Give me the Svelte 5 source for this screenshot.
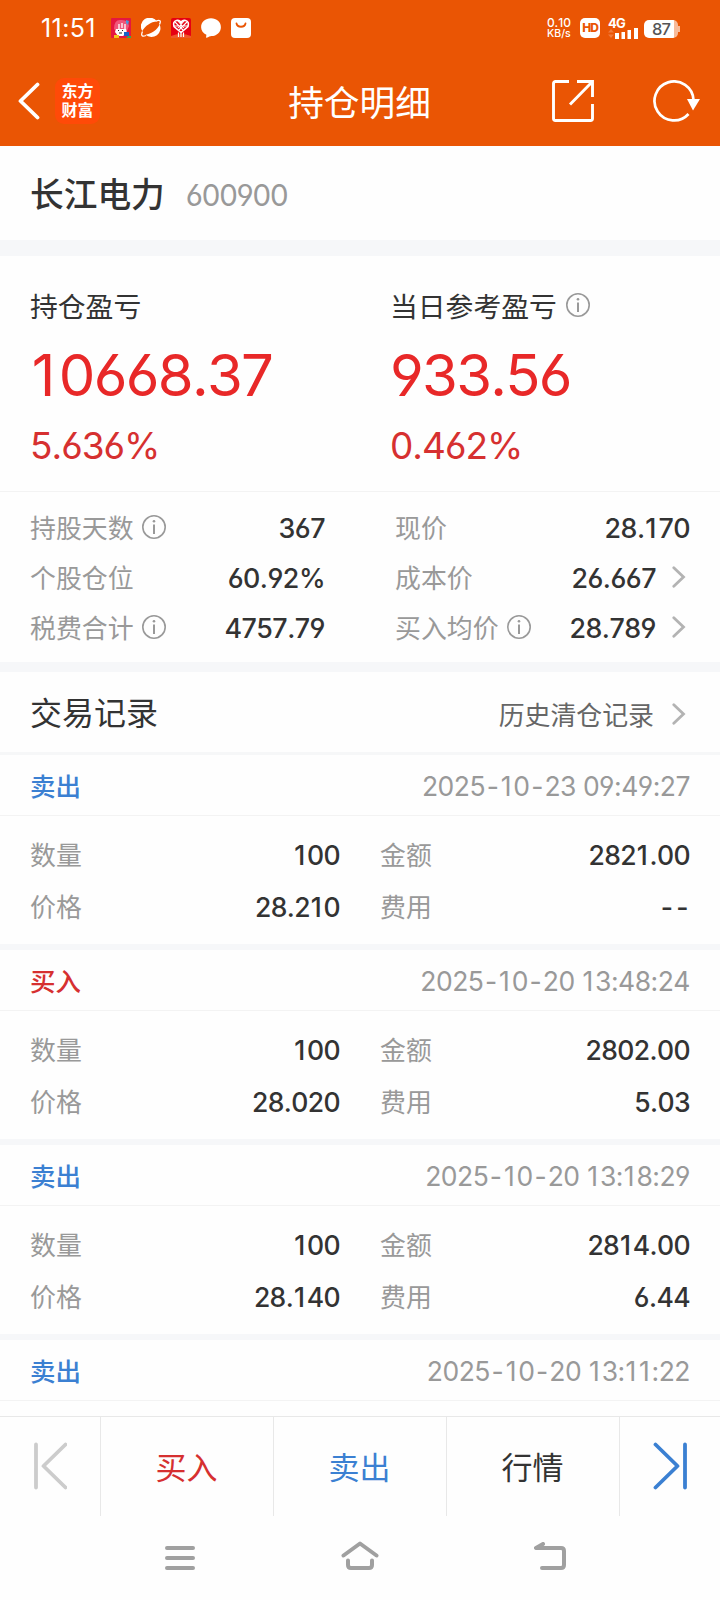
<script>
	const stats = [
		[
			{ label: '持股天数', value: '367', info: true },
			{ label: '个股仓位', value: '60.92%' },
			{ label: '税费合计', value: '4757.79', info: true }
		],
		[
			{ label: '现价', value: '28.170' },
			{ label: '成本价', value: '26.667', more: true },
			{ label: '买入均价', value: '28.789', info: true, more: true }
		]
	];

	const records = [
		{ side: '卖出', time: '2025-10-23 09:49:27', qty: '100', amount: '2821.00', price: '28.210', fee: '--' },
		{ side: '买入', time: '2025-10-20 13:48:24', qty: '100', amount: '2802.00', price: '28.020', fee: '5.03' },
		{ side: '卖出', time: '2025-10-20 13:18:29', qty: '100', amount: '2814.00', price: '28.140', fee: '6.44' },
		{ side: '卖出', time: '2025-10-20 13:11:22', qty: '', amount: '', price: '', fee: '' }
	];
</script>

<!-- gives the narrow 1 and - a bit more room -->
{#snippet num(text)}{#each text.split(/([1-])/) as part}{#if part === '1'}<span class="one">1</span>{:else if part === '-'}<span class="dash">-</span>{:else}{part}{/if}{/each}{/snippet}

{#snippet infoIcon()}
	<svg class="info" width="24" height="24" viewBox="0 0 24 24" fill="none" stroke="#999" stroke-width="1.6">
		<circle cx="12" cy="12" r="11.2" />
		<path d="M12 9.5V19" stroke-width="2" />
		<circle cx="12" cy="6.2" r="1.3" fill="#999" stroke="none" />
	</svg>
{/snippet}

{#snippet arrow()}
	<svg class="arrow" width="14" height="22" viewBox="0 0 14 22" fill="none" stroke="#b3b3b3" stroke-width="2.8" stroke-linecap="round">
		<path d="M1.8 1.8 11.5 11 1.8 20.2" />
	</svg>
{/snippet}

<div class="page">
	<header>
		<div class="status">
			<span class="clock">11:51</span>
			<div class="apps">
				<svg width="20" height="20" viewBox="0 0 20 20">
					<rect width="20" height="20" rx="1" fill="#e5173f" />
					<path d="M3 11Q3 2 9 2q8-1 9 6l-2 5H5Z" fill="#f0567a" />
					<path d="M15 2l3 1-1 4-2-2Z" fill="#4c9ad8" />
					<path d="M8 6v5M11 5v5M14 6v5" stroke="#fff" stroke-width="1.3" />
					<path d="M5 11h10l1 4-4 3H7l-3-4Z" fill="#fff" />
					<path d="M7 12.5h1M11 12.5h1M8 15h3" stroke="#222" stroke-width="1.2" />
					<path d="M3 17h5v3H3Z" fill="#f3c51c" />
					<path d="M13 14h5v4h-5Z" fill="#1762c5" />
					<path d="M17 18h3v2h-5Z" fill="#38a653" />
				</svg>
				<svg width="20" height="20" viewBox="0 0 20 20">
					<path d="M1.3 13A8.8 8.6 0 0 1 16 3.5C10 3.5 4 8 1.3 13Z" fill="#fff" />
					<path d="M4.5 16.8A9 8.6 0 0 0 18.5 6.5C17 11.5 10 16 4.5 16.8Z" fill="#fff" />
					<path d="M1.5 13.5C-.5 18 1.5 19 5 17.5M15 3c4-1.5 5.3-.3 3.5 3.5" fill="none" stroke="#fff" stroke-width="1.3" />
				</svg>
				<svg width="20" height="20" viewBox="0 0 20 20">
					<rect width="20" height="20" rx="2" fill="#e60012" />
					<path d="M0 20v-2q10-4 20 0v2Z" fill="#f0552a" />
					<path d="M10 14.5 3 8.5Q1.5 3.5 5.5 2.5 9 2 10 5q1-3 4.5-2.5 4 1 2.5 6Z" fill="none" stroke="#fff" stroke-width="1.6" />
					<path d="M4 4l8 8M7 3l6 7M16 4l-8 8M13 3l-6 7M3 8h14" stroke="#fff" stroke-width="1.1" />
					<path d="M7.5 14.5V19M10 14.5V19M12.5 14.5V19" stroke="#fff" stroke-width="1.2" />
				</svg>
				<svg width="20" height="20" viewBox="0 0 20 20">
					<path d="M10 .3c5.6 0 9.9 3.8 9.9 8.9S15.6 18 10.5 18c-1.5 0-2.700.9-5 1.800-.5.1-.5-.3-.4-.8l.3-2.200C2.200 15.300.1 12.500.1 9.200.1 4.100 4.400.3 10 .3Z" fill="#fff" />
				</svg>
				<svg width="20" height="20" viewBox="0 0 20 20">
					<rect width="20" height="20" rx="4" fill="#fff" />
					<path d="M5.5 5.5c.8 4.3 8.2 4.3 9 0" fill="none" stroke="#ea5504" stroke-width="1.8" stroke-linecap="round" />
				</svg>
			</div>
			<div class="speed"><span>0.10</span><span>KB/s</span></div>
			<span class="hd">HD</span>
			<div class="signal">
				<span>4G</span>
				<svg width="31" height="11" viewBox="0 0 31 11">
					<path d="M0 4.5 3 1l3 3.5ZM0 6.5 3 10l3-3.5Z" fill="#f07a3c" />
					<path d="M7 5h4v6H7ZM13.500 4h3.500v7h-3.500ZM19.500 2h3.500v9h-3.500ZM26 0h4v11h-4Z" fill="#fff" />
				</svg>
			</div>
			<div class="battery"><span>87</span></div>
		</div>
		<div class="titlebar">
			<svg width="22" height="38" viewBox="0 0 22 38" fill="none" stroke="#fff" stroke-width="3.8" stroke-linecap="round" stroke-linejoin="round">
				<path d="M19.5 2.5 2.5 19l17 16.5" />
			</svg>
			<div class="logo"><span>东方</span><span>财富</span></div>
			<h1>持仓明细</h1>
			<svg class="share" width="42" height="42" viewBox="0 0 42 42" fill="none" stroke="#fff" stroke-width="2.9">
				<path d="M17 1.5H3.5a2 2 0 0 0-2 2v35a2 2 0 0 0 2 2h35a2 2 0 0 0 2-2V24M25 1.5h15.5V17M40 2 18 24.5" />
			</svg>
			<svg width="48" height="42" viewBox="0 0 48 42">
				<path d="M36.5 34A19.5 19.5 0 1 1 41.5 20" fill="none" stroke="#fff" stroke-width="2.7" />
				<path d="M35 19h13L41 30.5Z" fill="#fff" />
			</svg>
		</div>
	</header>

	<section class="stock">
		<h2>长江电力</h2>
		<span class="code">600900</span>
	</section>

	<section class="profit">
		<div>
			<p class="name">持仓盈亏</p>
			<p class="big">{@render num('10668.37')}</p>
			<p class="pct">5.636%</p>
		</div>
		<div>
			<p class="name">当日参考盈亏{@render infoIcon()}</p>
			<p class="big">{@render num('933.56')}</p>
			<p class="pct">0.462%</p>
		</div>
	</section>

	<section class="stats">
		{#each stats as col}
			<div>
				{#each col as s (s.label)}
					<div class="stat">
						<span class="label">{s.label}</span>
						{#if s.info}{@render infoIcon()}{/if}
						<span class="value">{@render num(s.value)}</span>
						{#if s.more}{@render arrow()}{/if}
					</div>
				{/each}
			</div>
		{/each}
	</section>

	<section class="history">
		<h3>交易记录</h3>
		<span>历史清仓记录</span>
		{@render arrow()}
	</section>

	<main>
		{#each records as r (r.time)}
			<article>
				<div class="record-head">
					<span class="side" class:buy={r.side === '买入'}>{r.side}</span>
					<time>{@render num(r.time)}</time>
				</div>
				{#if r.qty}
					<dl>
						<dt>数量</dt><dd>{@render num(r.qty)}</dd>
						<dt>金额</dt><dd>{@render num(r.amount)}</dd>
						<dt>价格</dt><dd>{@render num(r.price)}</dd>
						<dt>费用</dt><dd class:empty={r.fee === '--'}>{@render num(r.fee)}</dd>
					</dl>
				{/if}
			</article>
		{/each}
	</main>

	<div class="actions">
		<button aria-label="上一个">
			<svg width="34" height="48" viewBox="0 0 34 48" fill="none" stroke="#ccc" stroke-width="3.8" stroke-linecap="round" stroke-linejoin="round">
				<path d="M3 2.5v43M32.5 2.5 10.5 24l22 21.5" />
			</svg>
		</button>
		<button class="buy">买入</button>
		<button class="sell">卖出</button>
		<button>行情</button>
		<button aria-label="下一个">
			<svg width="34" height="48" viewBox="0 0 34 48" fill="none" stroke="#3b80d2" stroke-width="3.8" stroke-linecap="round" stroke-linejoin="round">
				<path d="M32 2.5v43M2.5 2.5 24.5 24l-22 21.5" />
			</svg>
		</button>
	</div>

	<nav>
		<svg width="30" height="26" viewBox="0 0 30 26" fill="none" stroke="#a0a0a0" stroke-width="4" stroke-linecap="round">
			<path d="M2 4h26M2 14h26M2 24h26" />
		</svg>
		<svg width="38" height="30" viewBox="0 0 38 30" fill="none" stroke="#a0a0a0" stroke-width="4" stroke-linecap="round" stroke-linejoin="round">
			<path d="M2.5 15.5 19 3.5l16.5 12M7 20.5V25q0 3 3 3h18q3 0 3-3v-4.5" />
		</svg>
		<svg width="32" height="28" viewBox="0 0 32 28" fill="none" stroke="#a0a0a0" stroke-width="4" stroke-linecap="round" stroke-linejoin="round">
			<path d="M9 2 2 6h25q3 0 3 3v14q0 3-3 3H8" />
		</svg>
	</nav>
</div>

<style>
	:global(body) {
		margin: 0;
		background: #fefefe;
	}

	.page {
		width: 720px;
		height: 1600px;
		display: flex;
		flex-direction: column;
		overflow: hidden;
		background: #fefefe;
		color: #333;
		font-family: Inter, 'Noto Sans CJK SC', sans-serif;
		font-feature-settings: 'cv03', 'cv04';
		font-kerning: none;
	}

	h1, h2, h3, p, dl, dd {
		margin: 0;
		font-weight: 400;
	}

	svg {
		display: block;
		flex: none;
	}

	.one {
		padding: 0 0.09em 0 0.03em;
	}

	.dash {
		padding: 0 0.06em;
	}

	/* Header */
	header {
		height: 146px;
		flex: none;
		background: #ea5504;
		color: #fff;
	}

	.status {
		height: 56px;
		display: flex;
		align-items: center;
		padding: 0 40px;
	}

	.clock {
		width: 70px;
		padding-left: 1px;
		font-size: 25px;
		letter-spacing: 0.4px;
	}

	.apps {
		display: flex;
		gap: 10px;
		margin-right: auto;
	}

	.speed {
		display: flex;
		flex-direction: column;
		align-items: center;
		font-size: 10.5px;
		line-height: 11px;
		font-weight: 500;
		margin-right: 9px;
	}

	.speed span:first-child {
		font-size: 12px;
	}

	.hd {
		width: 20px;
		height: 20px;
		border-radius: 5px;
		background: #fff;
		color: #ea5504;
		font-size: 12px;
		line-height: 20px;
		font-weight: 800;
		text-align: center;
		letter-spacing: -1px;
		margin-right: 8px;
	}

	.signal {
		width: 30px;
		margin-right: 6px;
	}

	.signal span {
		display: block;
		font-size: 13px;
		line-height: 10px;
		font-weight: 700;
		letter-spacing: -0.8px;
	}

	.battery {
		position: relative;
		width: 34px;
		height: 18px;
		border-radius: 5px;
		background: linear-gradient(90deg, #fff 30px, #f7bb9b 30px);
		margin: 2px 2px 0 0;
	}

	.battery::after {
		content: '';
		position: absolute;
		right: -2px;
		top: 6px;
		width: 2px;
		height: 6px;
		background: #f7bb9b;
	}

	.battery span {
		display: block;
		font-size: 16.5px;
		line-height: 19px;
		font-weight: 500;
		letter-spacing: -0.8px;
		text-align: center;
		color: #555;
	}

	.titlebar {
		height: 90px;
		box-sizing: border-box;
		display: grid;
		grid-template-columns: 22px 61px 1fr 42px 48px;
		align-items: center;
		padding: 0 20px 0 18px;
	}

	.logo {
		width: 45px;
		height: 46px;
		box-sizing: border-box;
		margin-left: 15px;
		padding-bottom: 3px;
		border-radius: 9px;
		background: #ff4a08;
		display: flex;
		flex-direction: column;
		align-items: center;
		justify-content: center;
		font-family: 'Noto Sans CJK SC', sans-serif;
		font-size: 16px;
		line-height: 19px;
		font-weight: 700;
	}

	h1 {
		font-size: 35.7px;
		line-height: 40px;
		text-align: center;
		margin: 4px 0 0 8px;
	}

	.titlebar .share {
		margin-left: -58px;
	}

	/* Stock name */
	.stock {
		height: 94px;
		flex: none;
		display: flex;
		align-items: center;
		gap: 21px;
		padding-left: 30px;
		border-bottom: 16px solid #f6f7f9;
	}

	.stock h2 {
		font-size: 33.7px;
		font-weight: 500;
		margin-bottom: 1px;
	}

	.code {
		font-size: 29.5px;
		color: #999;
		letter-spacing: -1.2px;
		margin-top: 3px;
	}

	/* Profit */
	.profit {
		height: 235px;
		flex: none;
		display: grid;
		grid-template-columns: 360px 1fr;
		padding-left: 30px;
		border-bottom: 1px solid #f3f3f3;
	}

	.name {
		display: flex;
		align-items: center;
		font-size: 27.8px;
		line-height: 40px;
		margin-top: 31px;
	}

	.name .info {
		margin: -4px 0 0 9px;
	}

	.big {
		font-size: 58px;
		line-height: 70px;
		margin-top: 13px;
		color: #e82828;
		letter-spacing: -1.7px;
	}

	.pct {
		font-size: 37px;
		line-height: 46px;
		margin-top: 13px;
		color: #d63030;
		letter-spacing: -1px;
	}

	/* Stats */
	.stats {
		height: 150px;
		flex: none;
		display: grid;
		grid-template-columns: 295px 295px;
		column-gap: 70px;
		padding: 11px 30px 9px;
		border-bottom: 10px solid #f6f7f9;
	}

	.stat {
		height: 50px;
		display: flex;
		align-items: center;
	}

	.label {
		font-size: 25.9px;
		color: #999;
		margin-bottom: 3px;
	}

	.stat .info {
		margin: -2px 0 0 8px;
	}

	.value {
		margin-left: auto;
		font-size: 26.8px;
		font-weight: 500;
		letter-spacing: -0.5px;
	}

	.stat .arrow {
		margin: -2px 4px 0 16px;
	}

	/* History heading */
	.history {
		height: 80px;
		flex: none;
		display: flex;
		align-items: center;
		padding: 0 34px 0 30px;
		border-bottom: 3px solid #f6f7f8;
	}

	h3 {
		font-size: 32px;
		margin: 0 auto 3px 0;
	}

	.history span {
		font-size: 25.9px;
		color: #666;
		margin: 2px 18px 0 0;
	}

	.history .arrow {
		margin-top: 3px;
	}

	/* Records */
	main {
		flex: 1;
		min-height: 0;
		overflow: hidden;
	}

	article {
		height: 189px;
		border-bottom: 6px solid #f6f7f9;
	}

	.record-head {
		height: 60px;
		display: flex;
		align-items: center;
		justify-content: space-between;
		padding: 0 30px;
		border-bottom: 1px solid #f3f3f3;
	}

	.side {
		font-size: 25.5px;
		font-weight: 500;
		color: #3b80d2;
		margin-bottom: 2px;
	}

	.side.buy {
		color: #d63030;
	}

	time {
		font-size: 26.5px;
		color: #999;
		letter-spacing: -0.5px;
		margin-top: 2px;
	}

	dl {
		display: grid;
		grid-template-columns: 60px 250px 101px 249px;
		grid-auto-rows: 52px;
		align-items: center;
		padding: 14px 30px 0;
	}

	dt {
		font-size: 25.9px;
		color: #999;
		margin-bottom: 5px;
	}

	dt:nth-of-type(even) {
		margin-left: 40px;
	}

	dd {
		font-size: 26.5px;
		font-weight: 500;
		text-align: right;
		letter-spacing: -0.6px;
		margin-bottom: 2px;
	}

	dd.empty {
		letter-spacing: 0;
	}

	/* Bottom buttons */
	.actions {
		height: 99px;
		flex: none;
		display: grid;
		grid-template-columns: 101px 173px 173px 173px 100px;
		border-top: 1px solid #e8e8e8;
	}

	button {
		display: flex;
		align-items: center;
		justify-content: center;
		padding: 0 1px 2px 0;
		border: 0;
		border-right: 1px solid #e8e8e8;
		background: none;
		font: inherit;
		font-size: 31px;
		color: #333;
	}

	button:last-child {
		border-right: 0;
	}

	button.buy {
		color: #d63030;
	}

	button.sell {
		color: #3b80d2;
	}

	nav {
		height: 54px;
		flex: none;
		display: flex;
		align-items: flex-end;
		padding: 0 0 30px 165px;
	}

	nav svg:nth-child(2) {
		margin: 0 155px 0 146px;
	}
</style>
